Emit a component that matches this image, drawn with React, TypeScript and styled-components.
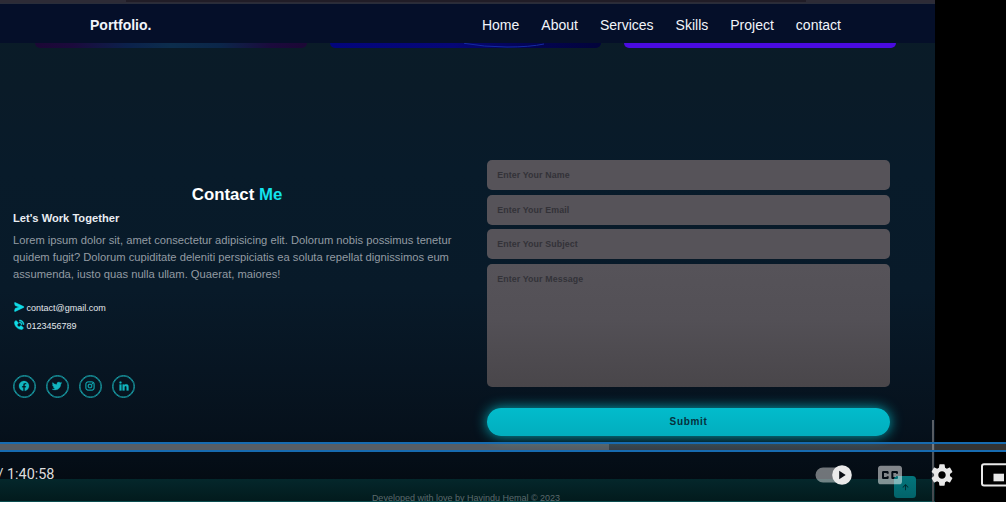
import React from "react";
import styled, { createGlobalStyle } from "styled-components";
import {
  BiSolidSend,
  BiSolidPhoneCall,
  BiLogoFacebookCircle,
  BiLogoTwitter,
  BiLogoInstagram,
  BiLogoLinkedin,
  BiUpArrowAlt,
} from "react-icons/bi";

const Global = createGlobalStyle`
  * { box-sizing: border-box; }
  body { margin: 0; background: #fff; font-family: "Liberation Sans", Arial, sans-serif; overflow: hidden; }
  h2, h3, p { margin: 0; }
`;

const Player = styled.div`
  position: relative;
  width: 1006px;
  height: 502px;
  overflow: hidden;
  background: #000;
`;

const Page = styled.div`
  display: flex;
  flex-direction: column;
  width: 935px;
  height: 502px;
  background: linear-gradient(#0a1c28 0, #0a1b28 90px, #081b2a 170px, #081a29 290px, #071522 370px, #06111c 430px, #040c14 479px);
`;

const BrowserEdge = styled.div`
  height: 4px;
  flex: none;
  display: flex;
  background: #2d2b36;
  border-bottom: 1px solid #292d3a;
`;

const AddressField = styled.div`
  width: 680px;
  height: 2px;
  margin-left: 126px;
  background: #211d27;
`;

const Header = styled.header`
  display: flex;
  flex: none;
  justify-content: space-between;
  align-items: center;
  height: 39px;
  padding: 2px 94px 0 90px;
  background: #050f29;
  color: #f2f5fb;
`;

const Logo = styled.span`
  font-size: 14px;
  font-weight: 700;
`;

const Nav = styled.nav`
  display: flex;
  gap: 22px;
  font-size: 14px;
`;

const Cards = styled.div`
  display: flex;
  flex: none;
  gap: 23px;
  height: 5px;
  padding-left: 35px;
`;

const Card = styled.div<{ $fill: string }>`
  width: 271.5px;
  border-radius: 0 0 5px 5px;
  background: ${(p) => p.$fill};
  overflow: hidden;
  svg { display: block; margin-left: 134px; }
`;

const Contact = styled.section`
  display: flex;
  height: 431px;
  flex: none;
  padding: 112px 44px 0 13px;
  justify-content: space-between;
`;

const Info = styled.div`
  width: 448px;
  padding-top: 25px;
`;

const Title = styled.h2`
  text-align: center;
  font-size: 16.8px;
  line-height: 20px;
  color: #fff;
  span { color: #12e3ec; }
`;

const Subtitle = styled.h3`
  margin-top: 6px;
  font-size: 11.15px;
  line-height: 14px;
  color: #e9edf2;
`;

const Blurb = styled.p`
  margin-top: 7px;
  font-size: 11.19px;
  line-height: 16.8px;
  color: #939ba3;
  white-space: nowrap;
`;

const ContactLine = styled.div<{ $top: number }>`
  display: flex;
  align-items: center;
  gap: 1.5px;
  height: 13px;
  margin-top: ${(p) => p.$top}px;
  font-size: 9px;
  color: #e3e8ec;
  svg { width: 12px; height: 12px; color: #10dbe6; margin-top: -4px; stroke: currentColor; stroke-width: 1px; }
  span { line-height: 13px; }
`;

const Socials = styled.div`
  display: flex;
  gap: 10.2px;
  margin: 41.3px 0 0 -0.5px;
`;

const Social = styled.a`
  display: flex;
  align-items: center;
  justify-content: center;
  width: 23px;
  height: 23px;
  border: 1px solid #189ba4;
  box-shadow: inset 0 0 0 0.5px #189ba4;
  border-radius: 50%;
  color: #12b5c0;
  svg { width: 12px; height: 12px; stroke: currentColor; stroke-width: 0.5px; }
`;

const Form = styled.form`
  display: flex;
  flex-direction: column;
  width: 403px;
  margin-right: 1px;
`;

const fieldText = `
  border: 0;
  outline: 0;
  border-radius: 5px;
  font: 700 8.8px "Liberation Sans", Arial, sans-serif;
  letter-spacing: 0.12px;
  &::placeholder { color: #333238; opacity: 1; }
`;

const Input = styled.input`
  ${fieldText}
  height: 30px;
  margin-bottom: 4.67px;
  padding: 0 10.3px;
  background: #565359;
`;

const Message = styled.textarea`
  ${fieldText}
  height: 123px;
  padding: 10px 10.3px;
  resize: none;
  background: linear-gradient(#565359, #535056 45%, #49464a);
`;

const Submit = styled.button`
  height: 28px;
  margin-top: 21px;
  border: 0;
  border-radius: 14px;
  background: linear-gradient(#02bccc, #02aebe);
  box-shadow: 0 0 13px #05a7b3;
  color: #06303c;
  font: 700 10px "Liberation Sans", Arial, sans-serif;
  letter-spacing: 0.65px;
`;

const Footer = styled.footer`
  position: relative;
  flex: none;
  height: 23px;
  padding: 14px 3px 0 0;
  background: linear-gradient(#04272b, #021a1c);
  text-align: center;
  font-size: 9px;
  line-height: 11px;
  color: #5b6a6d;
  box-shadow: inset 0 -1px #0b4d4f;
`;

const ToTop = styled.a`
  position: absolute;
  right: 19px;
  top: -3px;
  display: flex;
  align-items: center;
  justify-content: center;
  width: 22px;
  height: 22px;
  border-radius: 3.5px;
  background: linear-gradient(#03757c, #02636a);
  color: #022a30;
  svg { width: 11px; height: 11px; stroke: currentColor; }
`;

const ScrollMark = styled.div`
  position: absolute;
  left: 932px;
  top: 420px;
  width: 2px;
  height: 82px;
  background: linear-gradient(#5b6067, #42474c);
`;

const Controls = styled.div`
  position: absolute;
  inset: 442px 0 0 0;
`;

const Progress = styled.div`
  height: 10px;
  border: solid #176bb0;
  border-width: 2px 0;
  background: rgba(255, 255, 255, 0.2);
`;

const Loaded = styled.div`
  width: 609px;
  height: 6px;
  background: rgba(255, 255, 255, 0.16);
`;

const ControlRow = styled.div`
  display: flex;
  align-items: center;
  justify-content: space-between;
  height: 46px;
`;

const Time = styled.span`
  margin-left: -2.5px;
  font: 14.4px/18px Roboto, sans-serif;
  color: #ddd;
  padding-bottom: 1px;
`;

const Buttons = styled.div`
  display: flex;
  flex: none;
  width: 192px;
  svg { flex: none; display: block; }
`;

const links = ["Home", "About", "Services", "Skills", "Project", "contact"];

export default function App() {
  return (
    <>
      <Global />
      <Player>
        <Page>
          <BrowserEdge><AddressField /></BrowserEdge>
          <Header>
            <Logo>Portfolio.</Logo>
            <Nav>{links.map((l) => <span key={l}>{l}</span>)}</Nav>
          </Header>
          <Cards>
            <Card $fill="linear-gradient(90deg,#1c0735 0,#1b0a3c 14%,#0b214b 34%,#0c2d4c 50%,#0b2649 68%,#1b0a3c 87%,#1c0735)" />
            <Card $fill="linear-gradient(90deg,#03057c,#060777 45%,#030452 75%,#02033a)">
              <svg width="80" height="5" viewBox="0 0 80 5">
                <path d="M0 .3Q20 4 43 4T80 1" fill="none" stroke="#152ba0" strokeWidth="1" />
              </svg>
            </Card>
            <Card $fill="#4a0be0" />
          </Cards>
          <Contact>
            <Info>
              <Title>Contact <span>Me</span></Title>
              <Subtitle>Let's Work Together</Subtitle>
              <Blurb>
                Lorem ipsum dolor sit, amet consectetur adipisicing elit. Dolorum nobis possimus tenetur<br />
                quidem fugit? Dolorum cupiditate deleniti perspiciatis ea soluta repellat dignissimos eum<br />
                assumenda, iusto quas nulla ullam. Quaerat, maiores!
              </Blurb>
              <ContactLine $top={20}><BiSolidSend /><span>contact@gmail.com</span></ContactLine>
              <ContactLine $top={5}><BiSolidPhoneCall /><span>0123456789</span></ContactLine>
              <Socials>
                <Social><BiLogoFacebookCircle /></Social>
                <Social><BiLogoTwitter /></Social>
                <Social><BiLogoInstagram /></Social>
                <Social><BiLogoLinkedin /></Social>
              </Socials>
            </Info>
            <Form>
              <Input placeholder="Enter Your Name" />
              <Input placeholder="Enter Your Email" />
              <Input placeholder="Enter Your Subject" />
              <Message placeholder="Enter Your Message" />
              <Submit type="button">Submit</Submit>
            </Form>
          </Contact>
          <Footer>
            Developed with love by Havindu Hemal © 2023
            <ToTop><BiUpArrowAlt /></ToTop>
          </Footer>
        </Page>
        <ScrollMark />
        <Controls>
          <Progress><Loaded /></Progress>
          <ControlRow>
            <Time>/ 1:40:58</Time>
            <Buttons>
              <svg width="52" height="48" viewBox="0 0 52 48">
                <path d="M9 16.5H28V31.5H9A7.5 7.5 0 0 1 9 16.5Z" fill="#fff" opacity=".43" />
                <circle cx="28" cy="24" r="9.8" fill="#eaeaea" />
                <path d="M25.2 19.8V28.2L31.7 24Z" fill="#0b0f15" />
              </svg>
              <svg width="48" height="48" viewBox="0 0 36 36">
                <path fill="#fff" opacity=".5" fillRule="evenodd" d="M11,11 C9.89,11 9,11.9 9,13 L9,23 C9,24.1 9.89,25 11,25 L25,25 C26.1,25 27,24.1 27,23 L27,13 C27,11.9 26.1,11 25,11 L11,11 Z M17,17 L15.5,17 L15.5,16.5 L13.5,16.5 L13.5,19.5 L15.5,19.5 L15.5,19 L17,19 L17,20 C17,20.55 16.55,21 16,21 L13,21 C12.45,21 12,20.55 12,20 L12,16 C12,15.45 12.45,15 13,15 L16,15 C16.55,15 17,15.45 17,16 Z M24,17 L22.5,17 L22.5,16.5 L20.5,16.5 L20.5,19.5 L22.5,19.5 L22.5,19 L24,19 L24,20 C24,20.55 23.55,21 23,21 L20,21 C19.45,21 19,20.55 19,20 L19,16 C19,15.45 19.45,15 20,15 L23,15 C23.55,15 24,15.45 24,16 Z" />
              </svg>
              <svg width="56" height="48" viewBox="-3 0 42 36">
                <path fill="#e8e8e8" d="m 23.94,18.78 c .03,-0.25 .05,-0.51 .05,-0.78 0,-0.27 -0.02,-0.52 -0.05,-0.78 l 1.68,-1.32 c .15,-0.12 .19,-0.33 .09,-0.51 l -1.6,-2.76 c -0.09,-0.17 -0.31,-0.24 -0.48,-0.17 l -1.99,.8 c -0.41,-0.32 -0.86,-0.58 -1.35,-0.78 l -0.30,-2.12 c -0.02,-0.19 -0.19,-0.33 -0.39,-0.33 l -3.2,0 c -0.2,0 -0.36,.14 -0.39,.33 l -0.30,2.12 c -0.48,.2 -0.93,.47 -1.35,.78 l -1.99,-0.8 c -0.18,-0.07 -0.39,0 -0.48,.17 l -1.6,2.76 c -0.10,.17 -0.05,.39 .09,.51 l 1.68,1.32 c -0.03,.25 -0.05,.52 -0.05,.78 0,.26 .02,.52 .05,.78 l -1.68,1.32 c -0.15,.12 -0.19,.33 -0.09,.51 l 1.6,2.76 c .09,.17 .31,.24 .48,.17 l 1.99,-0.8 c .41,.32 .86,.58 1.35,.78 l .30,2.12 c .02,.19 .19,.33 .39,.33 l 3.2,0 c .2,0 .36,-0.14 .39,-0.33 l .30,-2.12 c .48,-0.2 .93,-0.47 1.35,-0.78 l 1.99,.8 c .18,.07 .39,0 .48,-0.17 l 1.6,-2.76 c .09,-0.17 .05,-0.39 -0.09,-0.51 l -1.68,-1.32 z m -5.94,2.01 c -1.54,0 -2.8,-1.25 -2.8,-2.8 0,-1.54 1.25,-2.8 2.8,-2.8 1.54,0 2.8,1.25 2.8,2.8 0,1.54 -1.25,2.8 -2.8,2.8 z" />
              </svg>
              <svg width="36" height="48" viewBox="0 0 36 48">
                <rect x="12" y="13.2" width="31" height="21.3" rx="2" fill="none" stroke="#e8e8e8" strokeWidth="2" />
                <rect x="23.5" y="22.7" width="10.5" height="7.6" fill="#e8e8e8" />
              </svg>
            </Buttons>
          </ControlRow>
        </Controls>
      </Player>
    </>
  );
}
